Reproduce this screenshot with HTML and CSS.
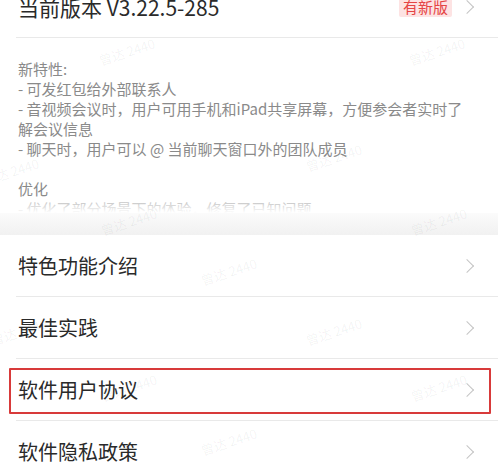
FILE: index.html
```html
<!DOCTYPE html>
<html lang="zh-CN">

<head>
  <meta charset="UTF-8">
  <meta name="viewport" content="width=device-width, initial-scale=1.0">
  <title>关于</title>
  <link rel="stylesheet" href="styles.css">
</head>

<body>
  <div class="page">
    <div class="version-row">
      <div class="version-title">当前版本 V3.22.5-285</div>
      <div class="version-right">
        <span class="badge-new">有新版</span>
        <span class="chevron"></span>
      </div>
    </div>

    <div class="notes">
      <div>新特性:</div>
      <div>- 可发红包给外部联系人</div>
      <div>- 音视频会议时，用户可用手机和iPad共享屏幕，方便参会者实时了解会议信息</div>
      <div>- 聊天时，用户可以 @ 当前聊天窗口外的团队成员</div>
      <div class="blank"></div>
      <div>优化</div>
      <div>- 优化了部分场景下的体验，修复了已知问题</div>
    </div>

    <div class="section-gap"></div>

    <div class="menu">
      <div class="menu-row">
        <span class="menu-label">特色功能介绍</span>
        <span class="chevron"></span>
      </div>
      <div class="menu-row">
        <span class="menu-label">最佳实践</span>
        <span class="chevron"></span>
      </div>
      <div class="menu-row highlighted">
        <span class="menu-label">软件用户协议</span>
        <span class="chevron"></span>
        <div class="highlight-box"></div>
      </div>
      <div class="menu-row">
        <span class="menu-label">软件隐私政策</span>
        <span class="chevron"></span>
      </div>
    </div>
  </div>

  <div class="watermarks">
    <span class="wm" style="left: 98px; top: 42px;">曾达 2440</span>
    <span class="wm" style="left: 408px; top: 42px;">曾达 2440</span>
    <span class="wm" style="left: -18px; top: 162px;">曾达 2440</span>
    <span class="wm" style="left: 305px; top: 148px;">曾达 2440</span>
    <span class="wm" style="left: 410px; top: 212px;">曾达 2440</span>
    <span class="wm" style="left: 100px; top: 212px;">曾达 2440</span>
    <span class="wm" style="left: 200px; top: 262px;">曾达 2440</span>
    <span class="wm" style="left: -10px; top: 322px;">曾达 2440</span>
    <span class="wm" style="left: 305px; top: 322px;">曾达 2440</span>
    <span class="wm" style="left: 100px; top: 378px;">曾达 2440</span>
    <span class="wm" style="left: 410px; top: 378px;">曾达 2440</span>
    <span class="wm" style="left: 200px; top: 432px;">曾达 2440</span>
  </div>
</body>

</html>
```

FILE: styles.css
```css
body {
  margin: 0px;
  padding: 0px;
  background-color: white;
  font-family: "Noto Sans CJK SC", "Noto Sans", sans-serif;
  color: #222;
  overflow: hidden;
}

.page {
  margin-top: -24px;
}

.version-row {
  display: flex;
  align-items: center;
  justify-content: space-between;
  height: 61px;
  margin-left: 16px;
  padding-left: 2px;
  padding-right: 22px;
  border-bottom: 1px solid #e9e9e9;
}

.version-title {
  font-size: 21px;
  color: #2a2a2a;
}

.version-right {
  display: flex;
  align-items: center;
  gap: 10px;
}

.badge-new {
  background-color: #fde3e3;
  color: #e54545;
  font-size: 15px;
  padding: 0px 4px;
  line-height: 21px;
  border-radius: 2px;
}

.chevron {
  display: inline-block;
  width: 9px;
  height: 9px;
  border-top: 1.2px solid #c4c4c4;
  border-right: 1.2px solid #c4c4c4;
  transform: rotate(45deg);
  margin-right: 4px;
}

.notes {
  position: relative;
  padding: 21px 34px 0px 18px;
  height: 154px;
  overflow: hidden;
  font-size: 15px;
  line-height: 20px;
  color: #8a8a8a;
}

.notes .blank {
  height: 20px;
}

.notes::after {
  content: "";
  position: absolute;
  left: 0;
  right: 0;
  bottom: 0;
  height: 16px;
  background: linear-gradient(rgba(255, 255, 255, 0.3), white);
}

.section-gap {
  height: 22px;
  background: linear-gradient(#fbfbfb, #f1f1f1);
}

.menu-row {
  position: relative;
  display: flex;
  align-items: center;
  justify-content: space-between;
  height: 61px;
  margin-left: 16px;
  padding-left: 2px;
  padding-right: 22px;
  border-bottom: 1px solid #e9e9e9;
}

.menu-label {
  font-size: 20px;
  color: #2a2a2a;
}

.highlight-box {
  position: absolute;
  left: -7px;
  right: 7px;
  top: 9px;
  bottom: 6px;
  border: 2px solid #d83a3a;
  border-radius: 1px;
}

.watermarks {
  position: absolute;
  left: 0;
  top: 0;
  width: 498px;
  height: 471px;
  pointer-events: none;
  overflow: hidden;
}

.wm {
  position: absolute;
  font-size: 13px;
  color: rgba(0, 0, 0, 0.06);
  transform: rotate(-18deg);
  white-space: nowrap;
}
```
